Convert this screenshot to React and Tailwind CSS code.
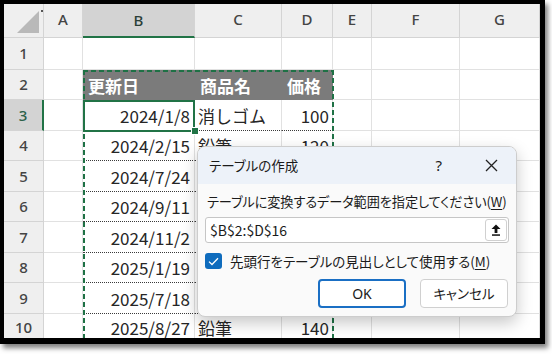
import React from "react";

const COLS = [
  { k: "A", w: "w-[39px]" },
  { k: "B", w: "w-[112px]" },
  { k: "C", w: "w-[87px]" },
  { k: "D", w: "w-[51px]" },
  { k: "E", w: "w-[39px]" },
  { k: "F", w: "w-[88px]" },
  { k: "G", w: "flex-1" },
];

const ROW_H = [
  "h-[32px]",
  "h-[30px]",
  "h-[31px]",
  "h-[30px]",
  "h-[31px]",
  "h-[30px]",
  "h-[31px]",
  "h-[30px]",
  "h-[31px]",
  "flex-1",
];

const DATA = {
  3: ["2024/1/8", "消しゴム", "100"],
  4: ["2024/2/15", "鉛筆", "120"],
  5: ["2024/7/24", "", ""],
  6: ["2024/9/11", "", ""],
  7: ["2024/11/2", "", ""],
  8: ["2025/1/19", "", ""],
  9: ["2025/7/18", "", ""],
  10: ["2025/8/27", "鉛筆", "140"],
};

function HeaderRow() {
  return (
    <div className="flex h-[34px] shrink-0 bg-[#efefef] text-[15px] text-[#444] font-['Noto_Sans',sans-serif] font-medium">
      <div className="w-[40px] shrink-0 border-r border-b border-[#d4d4d4] relative flex items-end justify-end pr-[3px] pb-[3px]">
        <svg width="23" height="23" viewBox="0 0 23 23" className="block">
          <polygon points="22,0 22,22 0,22" fill="#b9b9b9" />
        </svg>
        <div className="absolute right-0 top-[6px] w-[2px] h-[2px] bg-[#555]" />
      </div>
      {COLS.map((c) =>
        c.k === "B" ? (
          <div
            key={c.k}
            className={`${c.w} shrink-0 bg-[#d3d3d3] border-r border-[#d4d4d4] border-b-2 border-b-[#217346] flex items-center justify-center text-[#2a3f38]`}
          >
            {c.k}
          </div>
        ) : (
          <div
            key={c.k}
            className={`${c.w} shrink-0 border-r border-b border-[#d4d4d4] flex items-center justify-center pb-[2px]`}
          >
            {c.k}
          </div>
        )
      )}
    </div>
  );
}

function DataCell({ r, ci, c }) {
  const base = `${c.w} shrink-0 border-r border-b border-[#e1e1e1] flex items-center overflow-hidden whitespace-nowrap`;
  if (r === 2 && ci >= 1 && ci <= 3) {
    const labels = ["更新日", "商品名", "価格"];
    return (
      <div
        className={`${c.w} shrink-0 bg-[#7b7b7b] flex items-center pl-[5px] pt-[2px] text-white font-bold text-[17px]`}
      >
        {labels[ci - 1]}
      </div>
    );
  }
  const d = DATA[r];
  if (d && ci >= 1 && ci <= 3) {
    const dotted = r >= 3 && r <= 9;
    const cls = dotted
      ? `${c.w} shrink-0 border-r border-[#e1e1e1] border-b border-b-[#3a3a3a] border-dotted [border-right-style:solid] flex items-center overflow-hidden whitespace-nowrap`
      : base;
    if (ci === 1)
      return (
        <div className={`${cls} justify-end pr-[4px] pt-[1px]`}>{d[0]}</div>
      );
    if (ci === 2)
      return <div className={`${cls} pl-[3px] pt-[1px]`}>{d[1]}</div>;
    return (
      <div className={`${cls} justify-end pr-[3px] pt-[1px]`}>{d[2]}</div>
    );
  }
  return <div className={base} />;
}

function Row({ r }) {
  const sel = r === 3;
  return (
    <div className={`flex ${ROW_H[r - 1]} shrink-0`}>
      {sel ? (
        <div className="w-[40px] shrink-0 bg-[#d3d3d3] border-b border-[#d4d4d4] border-r-2 border-r-[#217346] flex items-center justify-center text-[15px] text-[#2b6149] font-['Noto_Sans',sans-serif] font-medium">
          {r}
        </div>
      ) : (
        <div className="w-[40px] shrink-0 bg-[#efefef] border-r border-b border-[#d4d4d4] flex items-center justify-center text-[15px] text-[#444] font-['Noto_Sans',sans-serif] font-medium">
          {r}
        </div>
      )}
      {COLS.map((c, ci) => (
        <DataCell key={c.k} r={r} ci={ci} c={c} />
      ))}
    </div>
  );
}

function Sheet() {
  return (
    <div className="flex flex-col h-full text-[17px] text-[#262626] font-['Noto_Sans_CJK_JP',sans-serif]">
      <HeaderRow />
      {[1, 2, 3, 4, 5, 6, 7, 8, 9, 10].map((r) => (
        <Row key={r} r={r} />
      ))}
    </div>
  );
}

function Overlays() {
  return (
    <>
      <div className="absolute left-[79px] top-[66px] w-[251px] h-[2px] bg-[repeating-linear-gradient(90deg,#1e7145_0_5px,transparent_5px_8px)]" />
      <div className="absolute left-[79px] top-[66px] w-[2px] h-[270px] bg-[repeating-linear-gradient(180deg,#1e7145_0_5px,transparent_5px_8px)]" />
      <div className="absolute left-[328px] top-[66px] w-[2px] h-[270px] bg-[repeating-linear-gradient(180deg,#1e7145_0_5px,transparent_5px_8px)]" />
      <div className="absolute left-[79px] top-[96px] w-[112px] h-[32px] border-2 border-[#217346]" />
      <div className="absolute left-[187px] top-[123px] w-[8px] h-[8px] bg-[#217346] border border-white" />
    </>
  );
}

function Dialog() {
  return (
    <div className="absolute left-[193px] top-[142px] w-[320px] h-[171px] rounded-[8px] border border-[#cdcdcd] bg-[#fafafa] shadow-[0_6px_16px_rgba(0,0,0,0.22)] overflow-hidden flex flex-col text-[#1b1b1b] font-['Noto_Sans_CJK_JP',sans-serif] [font-feature-settings:'palt']">
      <div className="h-[37px] shrink-0 bg-[#edf2f9] flex items-center pl-[11px] pr-[18px]">
        <span className="text-[13.5px]">テーブルの作成</span>
        <span className="ml-auto mr-[43px] text-[15px] font-['Noto_Sans',sans-serif]">?</span>
        <svg width="13" height="13" viewBox="0 0 13 13" className="block">
          <path d="M1 1 L12 12 M12 1 L1 12" stroke="#222" strokeWidth="1.3" fill="none" />
        </svg>
      </div>
      <div className="flex-1 flex flex-col px-[7px] pt-[9px]">
        <div className="pl-[2px] h-[18px] leading-[18px] text-[13.2px] whitespace-nowrap tracking-[-0.1px] flex">
          <span>テーブルに変換するデータ範囲を指定してください(</span>
          <span className="underline underline-offset-2">W</span>
          <span>)</span>
        </div>
        <div className="mt-[6px] h-[26px] border border-[#c6c6c6] bg-white rounded-[3px] flex items-center pl-[4px] pr-[1px]">
          <span className="text-[14px] text-[#1b1b1b]">$B$2:$D$16</span>
          <div className="ml-auto w-[22px] h-[22px] border border-[#d0d0d0] rounded-[3px] bg-white flex items-center justify-center">
            <svg width="10" height="12" viewBox="0 0 10 12" className="block">
              <path d="M0.5 5 L5 0.5 L9.5 5 Z" fill="#111" />
              <rect x="3.6" y="4.5" width="2.8" height="4.5" fill="#111" />
              <rect x="1" y="10.3" width="8" height="1.5" fill="#111" />
            </svg>
          </div>
        </div>
        <div className="mt-[10px] h-[16px] flex items-center">
          <div className="w-[17px] h-[16px] rounded-[3px] bg-[#0f6cbd] flex items-center justify-center">
            <svg width="11" height="9" viewBox="0 0 11 9" className="block">
              <path d="M1 4.6 L4 7.5 L10 1.3" stroke="white" strokeWidth="1.3" fill="none" />
            </svg>
          </div>
          <div className="ml-[8px] text-[13.5px] whitespace-nowrap flex">
            <span>先頭行をテーブルの見出しとして使用する(</span>
            <span className="underline underline-offset-2">M</span>
            <span>)</span>
          </div>
        </div>
        <div className="mt-[10px] flex justify-end gap-[14px] pr-[1px]">
          <div className="w-[88px] h-[29px] rounded-[4px] border-2 border-[#1a6fc4] bg-white flex items-center justify-center text-[14px] font-['Noto_Sans',sans-serif]">
            OK
          </div>
          <div className="w-[88px] h-[29px] rounded-[4px] border border-[#d0d0d0] bg-white flex items-center justify-center text-[13.5px]">
            キャンセル
          </div>
        </div>
      </div>
    </div>
  );
}

export default function App() {
  return (
    <div className="w-[552px] h-[354px] bg-white">
      <div className="relative w-[545px] h-[344px] border-t-[4px] border-l-[4px] border-r-[5px] border-b-[6px] border-black shadow-[3px_4px_5px_rgba(0,0,0,0.5)] bg-white overflow-hidden">
        <Sheet />
        <Overlays />
        <Dialog />
      </div>
    </div>
  );
}
